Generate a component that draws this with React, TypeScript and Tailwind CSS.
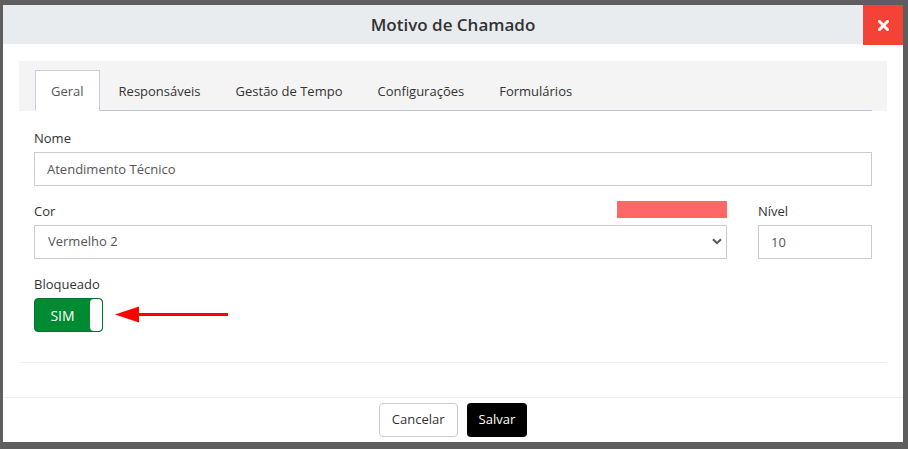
import { useState } from "react";

const tabs = ["Geral", "Responsáveis", "Gestão de Tempo", "Configurações", "Formulários"];

export default function App() {
    const [active, setActive] = useState(0);
    const [bloqueado, setBloqueado] = useState(true);

    return (
        <div className="w-[908px] h-[449px] bg-[#5e5e5e] pt-[5px] pl-[3px] overflow-hidden font-['Open_Sans',sans-serif] text-[13px] text-[#333]">
            <div className="w-[900px] h-[437px] bg-white flex flex-col">
                {/* header */}
                <div className="relative h-[39px] bg-[#e9ecef] flex items-center justify-center">
                    <h4 className="text-[17px] font-semibold text-[#333] leading-none">Motivo de Chamado</h4>
                    <button className="absolute right-0 top-0 w-[40px] h-[40px] bg-[#f44336] flex items-center justify-center">
                        <svg width="11" height="11" viewBox="0 0 11 11">
                            <path d="M1.5 1.5 L9.5 9.5 M9.5 1.5 L1.5 9.5" stroke="white" strokeWidth="3" strokeLinecap="square" />
                        </svg>
                    </button>
                </div>

                {/* body */}
                <div className="flex-1 px-[16px] pt-[17px]">
                    <div className="border-b border-[#eeeeee]">
                        {/* tabs */}
                        <div className="bg-[#f4f4f4] pt-[9px] px-[16px] pr-[15px]">
                            <ul className="flex gap-[3px] border-b border-[#b9c5d3]">
                                {tabs.map((t, i) => (
                                    <li key={t} className="-mb-px">
                                        <button
                                            onClick={() => setActive(i)}
                                            className={`h-[41px] px-[15px] leading-[40px] border ${
                                                active === i
                                                    ? "bg-white border-[#c6d0dc] border-b-white text-[#555]"
                                                    : "border-transparent text-[#333]"
                                            }`}
                                        >
                                            {t}
                                        </button>
                                    </li>
                                ))}
                            </ul>
                        </div>

                        {/* form */}
                        <div className="px-[15px] pt-[17px] pb-[30px]">
                            <label className="block leading-[20px] mb-[4px]">Nome</label>
                            <input
                                defaultValue="Atendimento Técnico"
                                className="w-full h-[34px] border border-[#cccccc] px-[12px] text-[#555] outline-none"
                            />

                            <div className="flex gap-[31px] mt-[15px]">
                                <div className="flex-1">
                                    <div className="flex justify-between mb-[4px]">
                                        <label className="leading-[20px]">Cor</label>
                                        <div className="w-[110px] h-[17px] bg-[#ff6666]" />
                                    </div>
                                    <div className="relative">
                                        <select
                                            defaultValue="v2"
                                            className="w-full h-[34px] border border-[#cccccc] pl-[13px] text-[#555] appearance-none outline-none bg-white"
                                        >
                                            <option value="v2">Vermelho 2</option>
                                        </select>
                                        <svg className="absolute right-[5px] top-[13px]" width="10" height="7" viewBox="0 0 10 7">
                                            <path d="M1 1.2 L5 5.2 L9 1.2" stroke="#555" strokeWidth="2" fill="none" />
                                        </svg>
                                    </div>
                                </div>
                                <div className="w-[114px]">
                                    <label className="block leading-[20px] mb-[4px]">Nível</label>
                                    <input
                                        defaultValue="10"
                                        className="w-full h-[34px] border border-[#cccccc] px-[12px] text-[#555] outline-none"
                                    />
                                </div>
                            </div>

                            <label className="block leading-[20px] mb-[4px] mt-[15px]">Bloqueado</label>
                            <div className="flex items-center">
                                <button
                                    onClick={() => setBloqueado(!bloqueado)}
                                    className="w-[69px] h-[34px] rounded-[4px] border border-[#05722d] bg-[#008a32] flex items-stretch"
                                >
                                    <span className="flex-1 flex items-center justify-center text-white text-[14px]">SIM</span>
                                    <span className="w-[12px] bg-white rounded-[4px]" />
                                </button>
                                <svg className="ml-[12px]" width="114" height="18" viewBox="0 0 114 18">
                                    <path d="M0 8.5 L24 0.5 L24 16.5 Z" fill="#ff0000" />
                                    <rect x="20" y="7" width="93" height="3" fill="#ff0000" />
                                </svg>
                            </div>
                        </div>
                    </div>
                </div>

                {/* footer */}
                <div className="h-[45px] border-t border-[#eeeeee] flex justify-center gap-[9px] pt-[5px]">
                    <button className="h-[34px] px-[12px] rounded-[4px] border border-[#cccccc] bg-white text-[#333]">Cancelar</button>
                    <button className="h-[34px] px-[12px] rounded-[4px] bg-black text-white">Salvar</button>
                </div>
            </div>
        </div>
    );
}
